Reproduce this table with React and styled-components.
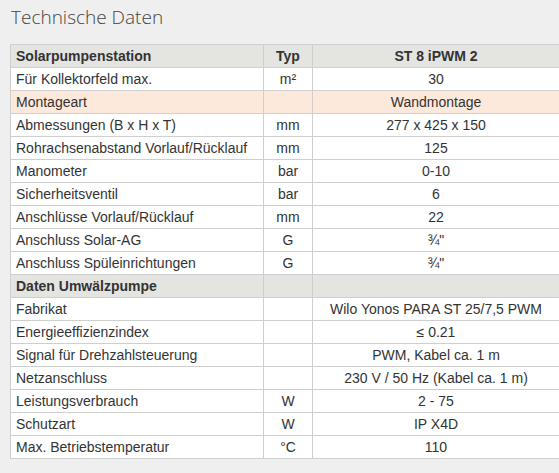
import React from 'react'
import styled, { createGlobalStyle } from 'styled-components'

const Global = createGlobalStyle`
  html, body {
    margin: 0;
    padding: 0;
    background: #efefef;
  }
`

const Page = styled.div`
  padding: 5px 0 0 10px;
  font-family: "Liberation Sans", Arial, sans-serif;
`

const Title = styled.h2`
  margin: 0 0 15px 1px;
  font-family: "Open Sans", sans-serif;
  font-weight: 300;
  font-size: 19px;
  line-height: 24px;
  color: #444;
`

const Table = styled.table`
  width: 549px;
  border-collapse: collapse;
  table-layout: fixed;
  font-size: 14px;
  color: #333;
`

const Row = styled.tr`
  background: ${p => (p.$head ? '#e4e4e0' : p.$hl ? '#fde9dc' : '#fff')};
  font-weight: ${p => (p.$head ? 'bold' : 'normal')};
`

const Cell = styled.td`
  border: 1px solid #cfcfcf;
  height: 22px;
  padding: 0 5px;
  line-height: 22px;
  text-align: ${p => (p.$center ? 'center' : 'left')};
  white-space: nowrap;
  overflow: hidden;
`

const rows = [
  { head: true, a: 'Solarpumpenstation', b: 'Typ', c: 'ST 8 iPWM 2' },
  { a: 'Für Kollektorfeld max.', b: 'm²', c: '30' },
  { hl: true, a: 'Montageart', b: '', c: 'Wandmontage' },
  { a: 'Abmessungen (B x H x T)', b: 'mm', c: '277 x 425 x 150' },
  { a: 'Rohrachsenabstand Vorlauf/Rücklauf', b: 'mm', c: '125' },
  { a: 'Manometer', b: 'bar', c: '0-10' },
  { a: 'Sicherheitsventil', b: 'bar', c: '6' },
  { a: 'Anschlüsse Vorlauf/Rücklauf', b: 'mm', c: '22' },
  { a: 'Anschluss Solar-AG', b: 'G', c: '¾"' },
  { a: 'Anschluss Spüleinrichtungen', b: 'G', c: '¾"' },
  { head: true, a: 'Daten Umwälzpumpe', b: '', c: '' },
  { a: 'Fabrikat', b: '', c: 'Wilo Yonos PARA ST 25/7,5 PWM' },
  { a: 'Energieeffizienzindex', b: '', c: '≤ 0.21' },
  { a: 'Signal für Drehzahlsteuerung', b: '', c: 'PWM, Kabel ca. 1 m' },
  { a: 'Netzanschluss', b: '', c: '230 V / 50 Hz (Kabel ca. 1 m)' },
  { a: 'Leistungsverbrauch', b: 'W', c: '2 - 75' },
  { a: 'Schutzart', b: 'W', c: 'IP X4D' },
  { a: 'Max. Betriebstemperatur', b: '°C', c: '110' },
]

export default function App() {
  return (
    <Page>
      <Global />
      <Title>Technische Daten</Title>
      <Table>
        <colgroup>
          <col style={{ width: 253 }} />
          <col style={{ width: 49 }} />
          <col style={{ width: 247 }} />
        </colgroup>
        <tbody>
          {rows.map((r, i) => (
            <Row key={i} $head={r.head} $hl={r.hl}>
              <Cell>{r.a}</Cell>
              <Cell $center>{r.b}</Cell>
              <Cell $center>{r.c}</Cell>
            </Row>
          ))}
        </tbody>
      </Table>
    </Page>
  )
}
